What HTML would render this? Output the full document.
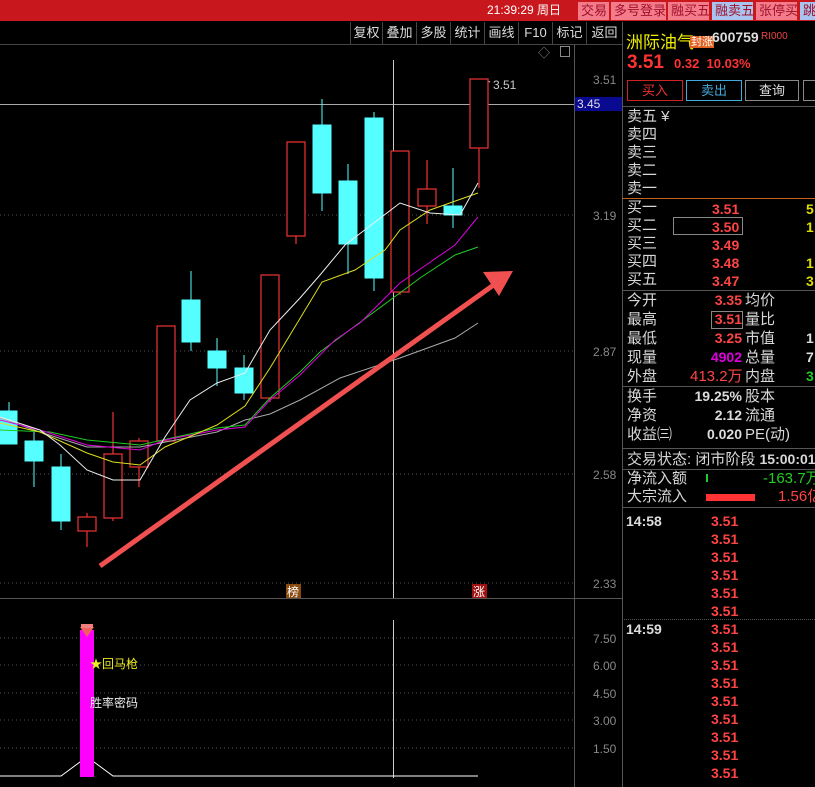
<!DOCTYPE html>
<html><head><meta charset="utf-8"><style>
*{margin:0;padding:0;box-sizing:border-box}
body{width:815px;height:787px;background:#000;overflow:hidden;position:relative;font-family:"Liberation Sans","Noto Sans CJK SC",sans-serif;color:#ddd}
.a{position:absolute;white-space:nowrap}
.top{left:0;top:0;width:815px;height:21px;background:#c8181e}
.tb{top:2px;height:18px;font-size:13px;line-height:18px;padding:0 3px;background:#f47c8a;color:#a0102a}
.r2{position:absolute;top:22px;height:22px;font-size:13px;line-height:22px;color:#ddd;text-align:center;border-left:1px solid #444}
.cn{font-size:15px;line-height:18px;color:#d8d8d8}
.rd{color:#ff4444}
.num{font-size:14px;line-height:18px;font-weight:bold}
.hl{position:absolute;left:622px;width:193px;height:1px;background:#555}
</style></head><body>
<div class="a top"></div>
<div class="a" style="left:487px;top:2px;font-size:12px;color:#fff;line-height:16px">21:39:29 周日</div>
<div class="a tb" style="left:578px;width:31px">交易</div>
<div class="a tb" style="left:611px;width:55px">多号登录</div>
<div class="a tb" style="left:668px;width:41px">融买五</div>
<div class="a tb" style="left:712px;width:41px;background:#aac4f0;color:#a0102a">融卖五</div>
<div class="a tb" style="left:756px;width:41px">张停买</div>
<div class="a tb" style="left:800px;width:20px;background:#aac4f0">跳</div>
<div class="r2" style="left:350px;width:32px">复权</div>
<div class="r2" style="left:382px;width:34px">叠加</div>
<div class="r2" style="left:416px;width:34px">多股</div>
<div class="r2" style="left:450px;width:34px">统计</div>
<div class="r2" style="left:484px;width:34px">画线</div>
<div class="r2" style="left:518px;width:34px">F10</div>
<div class="r2" style="left:552px;width:34px">标记</div>
<div class="r2" style="left:586px;width:36px">返回</div>
<div class="a" style="left:0;top:44px;width:622px;height:1px;background:#444"></div>
<div class="a" style="left:622px;top:22px;width:1px;height:765px;background:#555"></div>
<div class="a" style="left:538px;top:44px;font-size:12px;color:#888">◇</div>
<div class="a" style="left:560px;top:46px;width:10px;height:11px;border:1px solid #888"></div>

<svg class="a" style="left:0;top:0" width="622" height="787">
<g stroke="#555" stroke-dasharray="1,3" stroke-width="1">
<line x1="0" y1="215" x2="574" y2="215"/><line x1="0" y1="351" x2="574" y2="351"/><line x1="0" y1="474" x2="574" y2="474"/><line x1="0" y1="583" x2="574" y2="583"/>
<line x1="0" y1="638" x2="574" y2="638"/><line x1="0" y1="665" x2="574" y2="665"/><line x1="0" y1="693" x2="574" y2="693"/><line x1="0" y1="720" x2="574" y2="720"/><line x1="0" y1="748" x2="574" y2="748"/>
</g>
<line x1="574.5" y1="44" x2="574.5" y2="787" stroke="#555"/>
<line x1="0" y1="598.5" x2="622" y2="598.5" stroke="#555"/>
<line x1="0" y1="104.5" x2="574" y2="104.5" stroke="#aaa"/>
<line x1="393.5" y1="60" x2="393.5" y2="598" stroke="#ccc"/>
<line x1="393.5" y1="620" x2="393.5" y2="778" stroke="#ccc"/>
<g fill="#888" font-size="12" font-family="Liberation Sans">
<text x="593" y="84">3.51</text><text x="593" y="220">3.19</text><text x="593" y="356">2.87</text><text x="593" y="479">2.58</text><text x="593" y="588">2.33</text>
<text x="593" y="643">7.50</text><text x="593" y="670">6.00</text><text x="593" y="698">4.50</text><text x="593" y="725">3.00</text><text x="593" y="753">1.50</text>
</g>
<rect x="575" y="97" width="47" height="14" fill="#0a0a90"/>
<text x="577" y="108" fill="#ddd" font-size="12" font-family="Liberation Sans">3.45</text>
<text x="493" y="89" fill="#ccc" font-size="12" font-family="Liberation Sans">3.51</text>
<path d="M482 79 L490 82" stroke="#ccc"/>
<g stroke="#5ff" fill="#5ff">
<line x1="9" y1="402" x2="9" y2="444"/><rect x="0" y="411" width="17" height="33"/>
<line x1="34" y1="432" x2="34" y2="487"/><rect x="25" y="441" width="18" height="20"/>
<line x1="61" y1="454" x2="61" y2="530"/><rect x="52" y="467" width="18" height="54"/>
<line x1="191" y1="271" x2="191" y2="351"/><rect x="182" y="300" width="18" height="42"/>
<line x1="217" y1="338" x2="217" y2="386"/><rect x="208" y="351" width="18" height="17"/>
<line x1="244" y1="355" x2="244" y2="400"/><rect x="235" y="368" width="18" height="25"/>
<line x1="322" y1="99" x2="322" y2="211"/><rect x="313" y="125" width="18" height="68"/>
<line x1="348" y1="164" x2="348" y2="274"/><rect x="339" y="181" width="18" height="63"/>
<line x1="374" y1="112" x2="374" y2="291"/><rect x="365" y="118" width="18" height="160"/>
<line x1="453" y1="168" x2="453" y2="228"/><rect x="444" y="206" width="18" height="9"/>
</g>
<g stroke="#e03030" fill="#000" stroke-width="1.3">
<line x1="87" y1="513" x2="87" y2="547"/><rect x="78" y="517" width="18" height="14"/>
<line x1="113" y1="412" x2="113" y2="521"/><rect x="104" y="454" width="18" height="64"/>
<line x1="139" y1="438" x2="139" y2="487"/><rect x="130" y="441" width="18" height="26"/>
<rect x="157" y="326" width="18" height="115"/>
<line x1="270" y1="398" x2="270" y2="402"/><rect x="261" y="275" width="18" height="123"/>
<line x1="296" y1="236" x2="296" y2="244"/><rect x="287" y="142" width="18" height="94"/>
<line x1="400" y1="292" x2="400" y2="295"/><rect x="391" y="151" width="18" height="141"/>
<line x1="427" y1="160" x2="427" y2="224"/><rect x="418" y="189" width="18" height="17"/>
<line x1="479" y1="148" x2="479" y2="188"/><rect x="470" y="79" width="18" height="69"/>
</g>
<g fill="none" stroke-width="1">
<polyline stroke="#aaa" points="0,418 40,432 87,447 140,447 217,432 245,420 270,414 300,400 340,378 400,358 455,338 478,323"/>
<polyline stroke="#2c2" points="0,430 50,432 87,440 140,445 217,428 245,425 270,398 300,372 320,352 370,315 420,278 455,255 478,247"/>
<polyline stroke="#d0d" points="0,420 40,430 87,445 140,450 165,440 217,430 245,427 270,400 300,375 335,340 360,323 400,283 455,245 478,217"/>
<polyline stroke="#dd2" points="0,423 40,432 87,453 113,462 140,465 165,447 217,425 245,406 270,368 290,335 322,282 355,270 385,250 400,230 430,210 478,193"/>
<polyline stroke="#eee" points="0,417 40,430 60,445 87,470 113,480 140,480 165,437 190,400 217,383 245,373 270,330 300,298 320,275 345,245 400,203 430,213 460,215 478,183"/>
</g>
<line x1="100" y1="566" x2="495" y2="284" stroke="#f05050" stroke-width="5"/>
<polygon points="513,271 483,272 499,296" fill="#f05050"/>
<rect x="286" y="584" width="15" height="14" fill="#8a4a10"/>
<text x="287" y="596" fill="#fff" font-size="12" font-family="Noto Sans CJK SC">榜</text>
<rect x="472" y="584" width="15" height="14" fill="#a01010"/>
<text x="473" y="596" fill="#fff" font-size="12" font-family="Noto Sans CJK SC">涨</text>
<polyline fill="none" stroke="#fff" stroke-width="1" points="0,776 61,776 80,762 94,762 113,776 478,776"/>
<rect x="80" y="630" width="14" height="147" fill="#f0f"/>
<polygon points="80,627 94,627 87,637" fill="#f06060"/><rect x="81" y="624" width="12" height="4" fill="#f08080"/>
<text x="90" y="668" fill="#ee2" font-size="12" font-family="Noto Sans CJK SC">★回马枪</text>
<text x="90" y="707" fill="#eee" font-size="12" font-family="Noto Sans CJK SC">胜率密码</text>
</svg>

<div class="a" style="left:626px;top:28px;font-size:17px;color:#ee0">洲际油气</div>
<div class="a" style="left:690px;top:36px;font-size:11px;background:#e06020;color:#fff;line-height:12px;padding:0 1px">封涨</div>
<div class="a" style="left:712px;top:29px;font-size:14px;font-weight:bold;color:#ddd">600759</div>
<div class="a" style="left:761px;top:31px;font-size:10px;color:#e44">RI000</div>
<div class="a" style="left:627px;top:52px;font-size:19px;font-weight:bold;color:#f33">3.51</div>
<div class="a" style="left:674px;top:56px;font-size:13px;font-weight:bold;color:#f33">0.32&nbsp;&nbsp;10.03%</div>
<div class="a" style="left:627px;top:80px;width:56px;height:21px;border:1px solid #c22;color:#e33;font-size:13px;text-align:center;line-height:19px">买入</div>
<div class="a" style="left:686px;top:80px;width:56px;height:21px;border:1px solid #4ad;color:#4ad;font-size:13px;text-align:center;line-height:19px">卖出</div>
<div class="a" style="left:745px;top:80px;width:54px;height:21px;border:1px solid #888;color:#ddd;font-size:13px;text-align:center;line-height:19px">查询</div>
<div class="a" style="left:803px;top:80px;width:20px;height:21px;border:1px solid #888"></div>
<div class="hl" style="top:106px"></div>
<div class="a cn" style="left:627px;top:108px">卖五 ¥<br>卖四<br>卖三<br>卖二<br>卖一</div>
<div class="hl" style="top:198px;background:#c86020"></div>
<div class="a cn" style="left:627px;top:199px">买一<br>买二<br>买三<br>买四<br>买五</div>
<div class="a num rd" style="left:712px;top:200px">3.51<br>3.50<br>3.49<br>3.48<br>3.47</div>
<div class="a" style="left:673px;top:217px;width:70px;height:18px;border:1px solid #888"></div>
<div class="a num" style="left:806px;top:200px;color:#dd0">5<br>1<br><br>1<br>3</div>
<div class="hl" style="top:290px"></div>
<div class="a cn" style="left:627px;top:291px;line-height:19px">今开<br>最高<br>最低<br>现量<br>外盘</div>
<div class="a num" style="left:690px;top:291px;line-height:19px;text-align:right;width:52px"><span class="rd">3.35</span><br><span class="rd">3.51</span><br><span class="rd">3.25</span><br><span style="color:#d0d">4902</span><br><span class="rd" style="font-weight:normal;font-size:15px">413.2万</span></div>
<div class="a" style="left:711px;top:311px;width:32px;height:18px;border:1px solid #888"></div>
<div class="a cn" style="left:745px;top:291px;line-height:19px">均价<br>量比<br>市值<br>总量<br>内盘</div>
<div class="a num" style="left:806px;top:291px;line-height:19px"><br><br>1<br>7<br><span style="color:#2c2">3</span></div>
<div class="hl" style="top:386px"></div>
<div class="a cn" style="left:627px;top:387px;line-height:19px">换手<br>净资<br>收益㈢</div>
<div class="a num" style="left:680px;top:387px;line-height:19px;text-align:right;width:62px;color:#ddd">19.25%<br>2.12<br>0.020</div>
<div class="a cn" style="left:745px;top:387px;line-height:19px">股本<br>流通<br>PE(动)</div>
<div class="hl" style="top:448px"></div>
<div class="a cn" style="left:627px;top:450px">交易状态: 闭市阶段 <b style="font-size:14px">15:00:01</b></div>
<div class="hl" style="top:469px"></div>
<div class="a cn" style="left:627px;top:470px">净流入额<br>大宗流入</div>
<div class="a" style="left:706px;top:474px;width:2px;height:8px;background:#2c2"></div>
<div class="a num" style="left:763px;top:470px;color:#2c2;font-weight:normal;font-size:15px">-163.7万</div>
<div class="a" style="left:706px;top:494px;width:49px;height:7px;background:#f33"></div>
<div class="a rd" style="left:778px;top:488px;font-size:15px;line-height:18px">1.56亿</div>
<div class="hl" style="top:507px"></div>
<div class="a num" style="left:626px;top:512px;color:#ddd">14:58</div>
<div class="a num rd" style="left:711px;top:512px">3.51<br>3.51<br>3.51<br>3.51<br>3.51<br>3.51<br>3.51<br>3.51<br>3.51<br>3.51<br>3.51<br>3.51<br>3.51<br>3.51<br>3.51</div>
<div class="a" style="left:622px;top:619px;width:193px;border-top:1px dotted #555"></div>
<div class="a num" style="left:626px;top:620px;color:#ddd">14:59</div>
</body></html>
